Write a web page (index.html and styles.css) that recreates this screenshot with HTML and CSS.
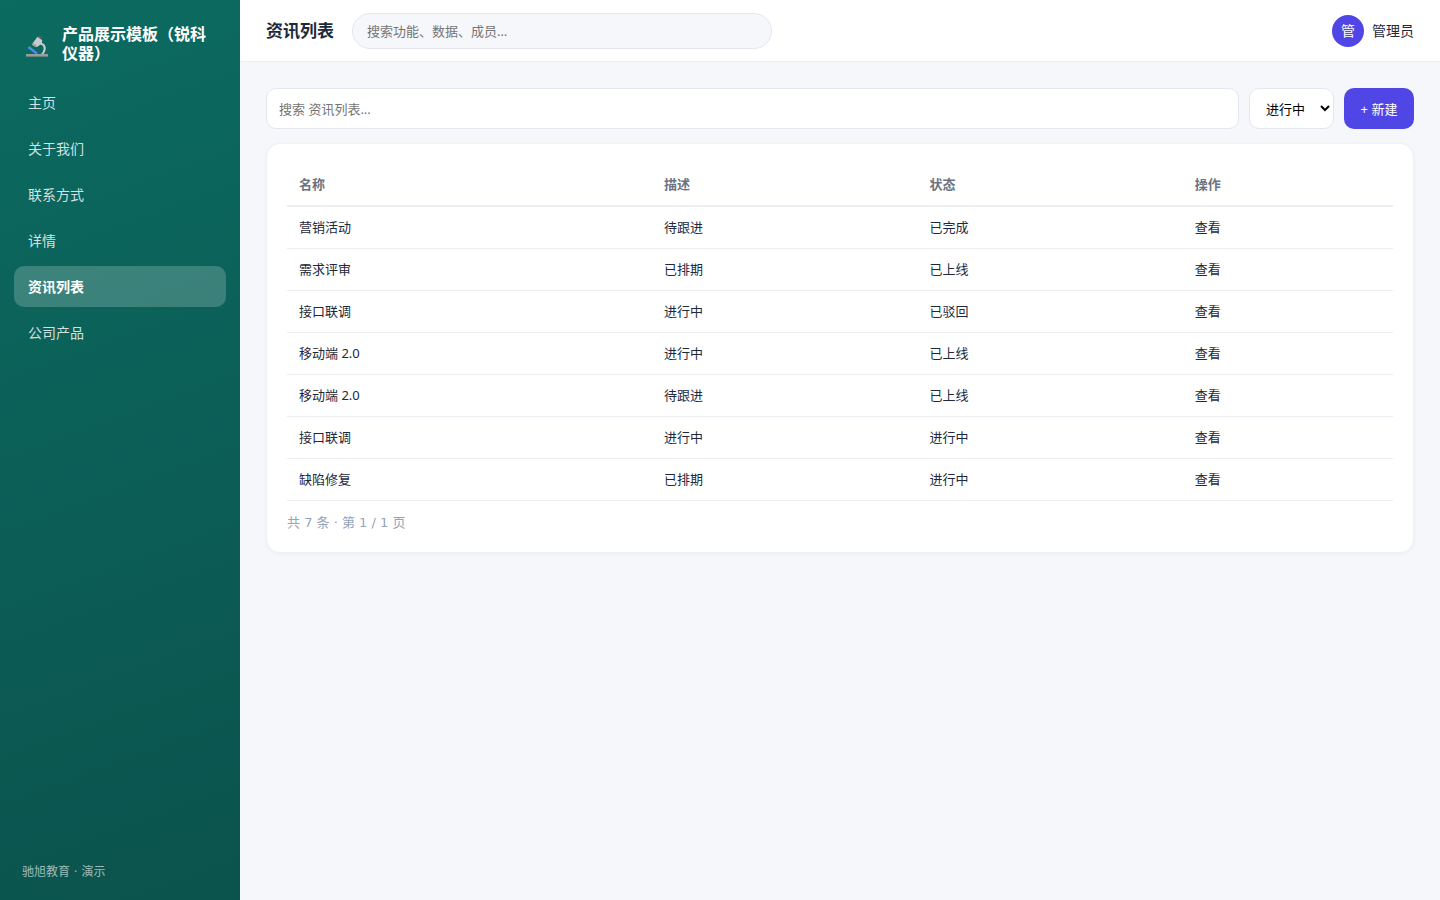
FILE: index.html
```html
<!DOCTYPE html>
<html lang="zh-CN">
<head>
  <meta charset="UTF-8">
  <meta name="viewport" content="width=device-width, initial-scale=1.0">
  <title>资讯列表</title>
  <link rel="stylesheet" href="styles.css">
</head>
<body>
  <div class="layout">
    <!-- 侧边栏 -->
    <aside class="sidebar">
      <div class="brand">
        <svg class="brand-icon" viewBox="0 0 22 22" aria-hidden="true">
          <path d="M14 8.500c3.500.5 5 3 4.600 6-.2 2-1.200 3.500-2.600 4.800" fill="none" stroke="#c8c8c8" stroke-width="2.200"/>
          <path d="M2.500 12l8.500 6.600" stroke="#4a90f5" stroke-width="2.400"/>
          <path d="M7 7.800l4.500-6 4.800 3.400-.6 3.300-4.900 3.700z" fill="#cacaca"/>
          <path d="M7 7.300l4 3.700-1.800 1-3.400-2.200z" fill="#a8a8a8"/>
          <path d="M13.200.6l2.800 2-.7 1.300-2.900-2z" fill="#6d5f5f"/>
          <path d="M0 19h22v2.600H0z" fill="#9b9b9b"/>
        </svg>
        <span class="brand-name">产品展示模板（锐科仪器）</span>
      </div>
      <nav class="menu">
        <a href="#">主页</a>
        <a href="#">关于我们</a>
        <a href="#">联系方式</a>
        <a href="#">详情</a>
        <a href="#" class="active">资讯列表</a>
        <a href="#">公司产品</a>
      </nav>
      <div class="sidebar-footer">驰旭教育 · 演示</div>
    </aside>

    <div class="main">
      <!-- 顶部栏 -->
      <header class="topbar">
        <h1>资讯列表</h1>
        <input type="search" class="global-search" placeholder="搜索功能、数据、成员…" aria-label="全局搜索">
        <div class="user">
          <span class="avatar">管</span>
          <span>管理员</span>
        </div>
      </header>

      <main class="content">
        <div class="toolbar">
          <input type="text" class="list-search" placeholder="搜索 资讯列表..." aria-label="搜索资讯列表">
          <select class="status-filter" aria-label="状态">
            <option>进行中</option>
            <option>已完成</option>
            <option>已上线</option>
            <option>已驳回</option>
          </select>
          <button type="button" class="btn-primary">+ 新建</button>
        </div>

        <section class="card">
          <table class="data-table">
            <colgroup>
              <col class="col-name">
              <col class="col-desc">
              <col class="col-status">
              <col>
            </colgroup>
            <thead>
              <tr><th>名称</th><th>描述</th><th>状态</th><th>操作</th></tr>
            </thead>
            <tbody>
              <tr><td>营销活动</td><td>待跟进</td><td>已完成</td><td><a href="#">查看</a></td></tr>
              <tr><td>需求评审</td><td>已排期</td><td>已上线</td><td><a href="#">查看</a></td></tr>
              <tr><td>接口联调</td><td>进行中</td><td>已驳回</td><td><a href="#">查看</a></td></tr>
              <tr><td>移动端 2.0</td><td>进行中</td><td>已上线</td><td><a href="#">查看</a></td></tr>
              <tr><td>移动端 2.0</td><td>待跟进</td><td>已上线</td><td><a href="#">查看</a></td></tr>
              <tr><td>接口联调</td><td>进行中</td><td>进行中</td><td><a href="#">查看</a></td></tr>
              <tr><td>缺陷修复</td><td>已排期</td><td>进行中</td><td><a href="#">查看</a></td></tr>
            </tbody>
          </table>
          <div class="pager">共 7 条 · 第 1 / 1 页</div>
        </section>
      </main>
    </div>
  </div>
</body>
</html>
```
FILE: styles.css
```css
* {
  box-sizing: border-box;
}

body {
  margin: 0;
  font-family: "Noto Sans", "Noto Sans CJK SC", sans-serif;
  font-size: 14px;
  line-height: 20px;
  color: #1e293b;
  background: #f5f7fb;
}

input,
select,
button {
  font-family: inherit;
  font-size: 13px;
}

a {
  color: inherit;
  text-decoration: none;
}

.layout {
  display: flex;
  min-height: 100vh;
}

/* 侧边栏 */
.sidebar {
  flex: 0 0 240px;
  display: flex;
  flex-direction: column;
  padding: 25px 14px 18px;
  background: linear-gradient(160deg, #0b6b61, #0b534d);
  color: #fff;
}

.brand {
  display: flex;
  align-items: center;
  gap: 14px;
  padding: 0 12px;
}

.brand-icon {
  flex: none;
  width: 22px;
  height: 22px;
  margin-top: 4px;
}

.brand-name {
  font-size: 16px;
  font-weight: 700;
  line-height: 19px;
}

.menu {
  display: flex;
  flex-direction: column;
  gap: 5px;
  margin-top: 19px;
}

.menu a {
  padding: 10px 14px;
  border-radius: 10px;
  line-height: 21px;
  color: rgba(255, 255, 255, 0.82);
}

.menu a.active {
  background: rgba(255, 255, 255, 0.2);
  color: #fff;
  font-weight: 700;
}

.sidebar-footer {
  margin-top: auto;
  padding: 0 8px;
  font-family: "DejaVu Sans", "Noto Sans CJK SC", sans-serif;
  font-size: 12px;
  color: rgba(255, 255, 255, 0.6);
}

/* 主区域 */
.main {
  flex: 1;
  min-width: 0;
}

.topbar {
  display: flex;
  align-items: center;
  gap: 18px;
  height: 62px;
  padding: 0 26px;
  background: #fff;
  border-bottom: 1px solid #eceef3;
}

.topbar h1 {
  margin: 0;
  font-size: 17px;
  font-weight: 700;
}

.global-search {
  width: 420px;
  height: 36px;
  padding: 0 14px;
  border: 1px solid #e4e7f0;
  border-radius: 18px;
  background: #f5f7fb;
  outline: none;
}

.user {
  display: flex;
  align-items: center;
  gap: 8px;
  margin-left: auto;
}

.avatar {
  width: 32px;
  height: 32px;
  border-radius: 50%;
  background: #4f46e5;
  color: #fff;
  line-height: 32px;
  text-align: center;
}

.content {
  padding: 26px;
}

.toolbar {
  display: flex;
  gap: 10px;
  margin-bottom: 14px;
}

.list-search,
.status-filter {
  height: 41px;
  border: 1px solid #e4e7f0;
  border-radius: 10px;
  background: #fff;
}

.list-search {
  flex: 1;
  min-width: 0;
  padding: 0 12px;
}

.status-filter {
  width: 85px;
  padding: 0 0 0 12px;
  color: #000;
}

.btn-primary {
  width: 70px;
  height: 41px;
  padding: 0;
  border: none;
  border-radius: 10px;
  background: #4f46e5;
  color: #fff;
  cursor: pointer;
}

/* 列表卡片 */
.card {
  padding: 20px;
  border: 1px solid #eff1f6;
  border-radius: 14px;
  background: #fff;
  box-shadow: 0 1px 4px rgba(15, 23, 42, 0.04);
}

.data-table {
  width: 100%;
  border-collapse: separate;
  border-spacing: 0;
  font-size: 13px;
}

.col-name {
  width: 33%;
}

.col-desc,
.col-status {
  width: 24%;
}

.data-table th,
.data-table td {
  padding: 11px 12px;
  text-align: left;
  line-height: 19px;
  border-bottom: 1px solid #eceef3;
}

.data-table th {
  border-bottom-width: 2px;
  color: #6b7280;
  font-weight: 700;
}

.pager {
  padding-top: 12px;
  font-family: "DejaVu Sans", "Noto Sans CJK SC", sans-serif;
  font-size: 13px;
  line-height: 19px;
  color: #94a3b8;
}
```
